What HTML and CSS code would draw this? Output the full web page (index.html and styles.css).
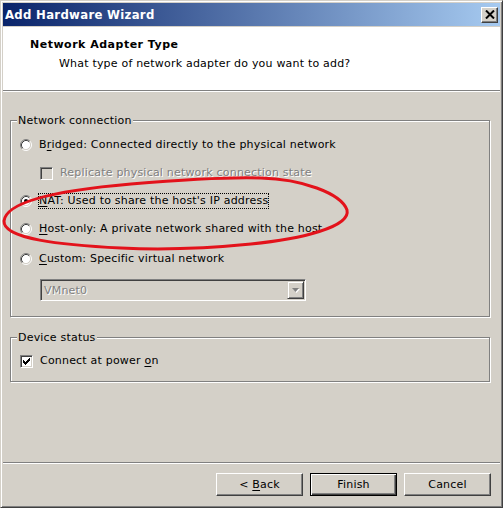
FILE: index.html
```html
<!DOCTYPE html>
<html lang="en">
<head>
<meta charset="utf-8"/>
<title>Add Hardware Wizard</title>
<link rel="stylesheet" href="styles.css">
</head>
<body>
<svg class="defs" width="0" height="0" aria-hidden="true">
  <symbol id="radio" viewBox="0 0 12 12">
    <circle cx="6" cy="6" r="4.5" fill="#fff"/>
    <path d="M2.11 9.89A5.5 5.5 0 0 1 9.89 2.11" stroke="#808080" fill="none"/>
    <path d="M9.89 2.11A5.5 5.5 0 0 1 2.11 9.89" stroke="#fff" fill="none"/>
    <path d="M2.82 9.18A4.5 4.5 0 0 1 9.18 2.82" stroke="#404040" fill="none"/>
    <path d="M9.18 2.82A4.5 4.5 0 0 1 2.82 9.18" stroke="#d4d0c8" fill="none"/>
  </symbol>
  <symbol id="check" viewBox="0 0 7 7">
    <path d="M6 0h1v1h-1z M5 1h2v1h-2z M0 2h1v1h-1z M4 2h3v1h-3z M0 3h2v1h-2z M3 3h3v1h-3z M0 4h5v1h-5z M1 5h3v1h-3z M2 6h1v1h-1z" fill="#000"/>
  </symbol>
</svg>

<div class="window">
  <div class="titlebar">
    <span class="title">Add Hardware Wizard</span>
    <span class="close-btn">
      <svg width="10" height="9" viewBox="0 0 10 9"><path d="M1 0.5L9 8.5M9 0.5L1 8.5" stroke="#000" stroke-width="2"/></svg>
    </span>
  </div>

  <div class="header">
    <div class="header-title">Network Adapter Type</div>
    <div class="header-sub">What type of network adapter do you want to add?</div>
  </div>

  <div class="content">
    <div class="group">
      <div class="group-title">Network connection</div>
      <div class="option first">
        <svg class="radio" width="12" height="12"><use href="#radio"/></svg>
        <span class="label">B<u>r</u>idged: Connected directly to the physical network</span>
      </div>
      <div class="option sub">
        <span class="checkbox disabled"></span>
        <span class="label disabled">Replicate physical network connection state</span>
      </div>
      <div class="option">
        <svg class="radio" width="12" height="12"><use href="#radio"/><circle cx="6" cy="6" r="2" fill="#000"/></svg>
        <span class="label focus"><u>N</u>AT: Used to share the host's IP address</span>
      </div>
      <div class="option">
        <svg class="radio" width="12" height="12"><use href="#radio"/></svg>
        <span class="label"><u>H</u>ost-only: A private network shared with the host</span>
      </div>
      <div class="option custom">
        <svg class="radio" width="12" height="12"><use href="#radio"/></svg>
        <span class="label"><u>C</u>ustom: Specific virtual network</span>
      </div>
      <div class="combo">
        <span class="combo-text">VMnet0</span>
        <span class="combo-btn">
          <svg width="8" height="5" viewBox="0 0 8 5"><path d="M1 1h7l-3.5 4z" fill="#fff"/><path d="M0 0h7l-3.5 4z" fill="#808080"/></svg>
        </span>
      </div>
    </div>

    <div class="group device">
      <div class="group-title">Device status</div>
      <div class="option first">
        <span class="checkbox"><svg width="7" height="7"><use href="#check"/></svg></span>
        <span class="label">Connect at power <u>o</u>n</span>
      </div>
    </div>
  </div>

  <div class="footer">
    <button class="btn">&lt; <u>B</u>ack</button>
    <button class="btn default">Finish</button>
    <button class="btn">Cancel</button>
  </div>

  <svg class="markup" width="503" height="508" viewBox="0 0 503 508">
    <path d="M3 220 C5 200, 60 189, 130 183 C190 178, 230 176, 260 177 C300 178, 340 192, 346 209 C350 226, 300 238, 250 243 C200 248, 160 249, 120 247 C60 244, 2 238, 3 220 Z" fill="none" stroke="#e3121b" stroke-width="3"/>
  </svg>
</div>
</body>
</html>
```

FILE: styles.css
```css
body {
    margin: 0;
    font-family: "DejaVu Sans", sans-serif;
    font-size: 11px;
    letter-spacing: 0.2px;
    color: #000;
    background: #d4d0c8;
}
.defs {
    position: absolute;
    width: 0;
    height: 0;
}
.window {
    position: relative;
    width: 503px;
    height: 508px;
    box-sizing: border-box;
    display: flex;
    flex-direction: column;
    padding: 2px;
    background: #d4d0c8;
    border: 1px solid;
    border-color: #d4d0c8 #404040 #404040 #d4d0c8;
    box-shadow: inset 1px 1px 0 #fff, inset -1px -1px 0 #808080;
}
.titlebar {
    height: 23px;
    flex: none;
    display: flex;
    align-items: center;
    justify-content: space-between;
    padding: 0 2px;
    background: linear-gradient(to right, #0a246a, #a6caf0);
    color: #fff;
}
.title {
    font-family: "DejaVu Sans Condensed", "DejaVu Sans", sans-serif;
    font-stretch: condensed;
    font-weight: bold;
    font-size: 13px;
    letter-spacing: 0.3px;
}
.close-btn {
    width: 17px;
    height: 16px;
    box-sizing: border-box;
    display: flex;
    align-items: center;
    justify-content: center;
    background: #d4d0c8;
    border: 1px solid;
    border-color: #fff #404040 #404040 #fff;
    box-shadow: inset -1px -1px 0 #808080;
}
.header {
    flex: none;
    height: 64px;
    box-sizing: border-box;
    margin-top: 1px;
    padding: 11px 0 0 27px;
    background: #fff;
    border-bottom: 1px solid #808080;
    box-shadow: 0 1px 0 #fff;
    line-height: 13px;
}
.header-title {
    font-weight: bold;
    letter-spacing: 0.5px;
}
.header-sub {
    margin: 6px 0 0 29px;
}
.content {
    flex: 1;
}
.group {
    margin: 29px 10px 0 7px;
    padding-bottom: 15px;
    border: 1px solid #808080;
    box-shadow: 1px 1px 0 #fff, inset 1px 1px 0 #fff;
}
.group.device {
    margin-top: 20px;
    padding-bottom: 12px;
}
.group-title {
    width: fit-content;
    margin: -7px 0 0 6px;
    padding: 0 1px;
    line-height: 13px;
    background: #d4d0c8;
}
.option {
    display: flex;
    align-items: center;
    height: 16px;
    margin: 12px 0 0 9px;
}
.option.first {
    margin-top: 10px;
}
.group.device .option.first {
    margin-top: 9px;
}
.option.sub {
    margin-left: 29px;
}
.option.custom {
    margin-top: 14px;
}
.radio {
    flex: none;
    margin-right: 6px;
}
.checkbox {
    flex: none;
    width: 13px;
    height: 13px;
    box-sizing: border-box;
    margin-right: 6px;
    display: flex;
    align-items: center;
    justify-content: center;
    background: #fff;
    border: 1px solid;
    border-color: #808080 #fff #fff #808080;
    box-shadow: inset 1px 1px 0 #404040, inset -1px -1px 0 #d4d0c8;
}
.checkbox.disabled {
    background: #d4d0c8;
}
.label {
    height: 16px;
    box-sizing: border-box;
    line-height: 14px;
    border: 1px dotted transparent;
    white-space: nowrap;
}
.label.focus {
    border-color: #000;
}
.label.disabled {
    color: #808080;
    text-shadow: 1px 1px 0 #fff;
}
u {
    text-underline-offset: 2px;
}
.combo {
    width: 266px;
    height: 22px;
    box-sizing: border-box;
    margin: 12px 0 0 29px;
    padding: 1px;
    display: flex;
    align-items: center;
    justify-content: space-between;
    background: #d4d0c8;
    border: 1px solid;
    border-color: #808080 #fff #fff #808080;
    box-shadow: inset 1px 1px 0 #404040, inset -1px -1px 0 #d4d0c8;
}
.combo-text {
    padding-left: 2px;
    color: #808080;
    text-shadow: 1px 1px 0 #fff;
}
.combo-btn {
    width: 17px;
    height: 18px;
    box-sizing: border-box;
    display: flex;
    align-items: center;
    justify-content: center;
    background: #d4d0c8;
    border: 1px solid;
    border-color: #d4d0c8 #404040 #404040 #d4d0c8;
    box-shadow: inset 1px 1px 0 #fff, inset -1px -1px 0 #808080;
}
.footer {
    flex: none;
    display: flex;
    justify-content: flex-end;
    gap: 7px;
    padding: 10px 9px 9px;
    border-top: 1px solid #808080;
    box-shadow: inset 0 1px 0 #fff;
}
.btn {
    width: 87px;
    height: 23px;
    box-sizing: border-box;
    padding: 0;
    font: inherit;
    letter-spacing: inherit;
    color: #000;
    background: #d4d0c8;
    border: 1px solid;
    border-color: #fff #404040 #404040 #fff;
    box-shadow: inset -1px -1px 0 #808080;
}
.btn.default {
    border-color: #000;
    box-shadow: inset 1px 1px 0 #fff, inset -1px -1px 0 #404040, inset -2px -2px 0 #808080;
}
.markup {
    position: absolute;
    left: 0;
    top: 0;
    pointer-events: none;
}
```
